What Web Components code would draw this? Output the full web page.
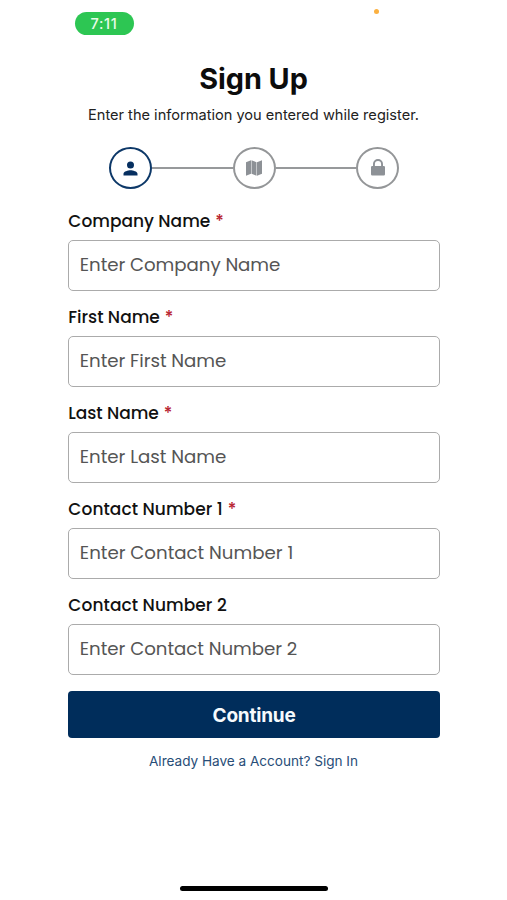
<!DOCTYPE html>
<html lang="en">
<head>
<meta charset="utf-8">
<title>Sign Up</title>
<style>
html,body{margin:0;height:100%;background:#fff;overflow:hidden}
</style>
</head>
<body>
<sign-up-screen></sign-up-screen>
<script>
// Single line of text whose tracking is adjusted to fill the given width.
class FitText extends HTMLElement {
  connectedCallback() {
    const root = this.attachShadow({mode: 'open'});
    root.innerHTML = `<style>:host{display:inline-block;white-space:nowrap}span{display:inline-block}</style><span><slot></slot></span>`;
    const span = root.querySelector('span');
    const want = parseFloat(this.getAttribute('width'));
    const n = this.textContent.length;
    const ls = (want - span.getBoundingClientRect().width) / n;
    span.style.letterSpacing = ls.toFixed(3) + 'px';
  }
}
customElements.define('fit-text', FitText);

class StatusBar extends HTMLElement {
  constructor() {
    super();
    this.attachShadow({mode: 'open'}).innerHTML = `<style>
:host{display:block;position:relative;height:47px;box-sizing:border-box;padding:12px 0 0 74.5px}
.pill{display:flex;align-items:center;justify-content:center;width:59px;height:23px;border-radius:12px;background:#2dc653;color:#e9fbe9;font:500 14.5px/23px Inter,sans-serif}
i{position:absolute;left:373.5px;top:8.5px;width:5px;height:5px;border-radius:50%;background:#fbb040}
</style><div class="pill"><fit-text width="27">7:11</fit-text></div><i></i>`;
  }
}
customElements.define('status-bar', StatusBar);

class StepIcon extends HTMLElement {
  constructor() {
    super();
    this.attachShadow({mode: 'open'}).innerHTML = `<style>
:host{display:flex;flex:none;box-sizing:border-box;width:43px;height:42px;border:2px solid #949698;border-radius:50%;align-items:center;justify-content:center;color:#8d9196}
:host([active]){border-color:#0d3868;color:#062f60}
::slotted(svg){display:block;fill:currentColor}
</style><slot></slot>`;
  }
}
customElements.define('step-icon', StepIcon);

class StepTrack extends HTMLElement {
  constructor() {
    super();
    this.attachShadow({mode: 'open'}).innerHTML = `<style>
:host{display:flex;align-items:center;width:290px;margin:0 0 0 109px}
b{flex:1;height:2px;background:#97999b}
</style>
<step-icon active><svg width="21" height="21" viewBox="0 0 24 24"><path d="M12 12a4 4 0 1 0 0-8 4 4 0 0 0 0 8zm0 2c-2.700 0-8 1.340-8 4v2h16v-2c0-2.660-5.300-4-8-4z"/></svg></step-icon>
<b></b>
<step-icon><svg width="16" height="16" viewBox="0 0 16 16"><path d="M0 2.300 5 .2V13.700L0 15.800zM5.500.2 10.500 2.300V15.800L5.500 13.700zM11 2.300 16 .2V13.700L11 15.800z"/></svg></step-icon>
<b></b>
<step-icon><svg width="14" height="17" viewBox="0 0 14 17" style="margin-top:-1px"><path fill-rule="evenodd" d="M2 7V5a5 5 0 0 1 10 0v2h.8q1.200 0 1.200 1.200v7q0 1.200-1.200 1.200H1.200Q0 16.400 0 15.200V8.200Q0 7 1.200 7zm1.900 0h6.200V5a3.100 3.100 0 0 0-6.200 0z"/></svg></step-icon>`;
  }
}
customElements.define('step-track', StepTrack);

class FormField extends HTMLElement {
  connectedCallback() {
    const g = n => this.getAttribute(n);
    this.attachShadow({mode: 'open'}).innerHTML = `<style>
:host{display:block}
.label{display:flex;gap:5px;height:30px;font:500 17px/22px Poppins,Inter,sans-serif;color:#111}
.star{color:#b8232f}
.box{display:flex;align-items:center;box-sizing:border-box;height:51px;padding:0 10.500px;border:1.500px solid #ababab;border-radius:5px;font:400 18.200px/26px Poppins,Inter,sans-serif;color:#555}
.box fit-text{margin-top:-1px}
</style>
<div class="label"><fit-text width="${g('lw')}">${g('label')}</fit-text>${this.hasAttribute('required') ? '<span class="star">*</span>' : ''}</div>
<div class="box"><fit-text width="${g('pw')}">${g('placeholder')}</fit-text></div>`;
  }
}
customElements.define('form-field', FormField);

class PrimaryButton extends HTMLElement {
  constructor() {
    super();
    this.attachShadow({mode: 'open'}).innerHTML = `<style>
:host{display:flex;align-items:center;justify-content:center;box-sizing:border-box;height:47px;padding-top:2px;border-radius:4px;background:#002d5b;color:#f6fafd;font:700 19px/45px Inter,sans-serif}
</style><slot></slot>`;
  }
}
customElements.define('primary-button', PrimaryButton);

class SignUpScreen extends HTMLElement {
  constructor() {
    super();
    this.attachShadow({mode: 'open'}).innerHTML = `<style>
:host{display:flex;flex-direction:column;width:507px;height:900px;background:#fff;color:#0c0c0c;font-family:Inter,sans-serif}
h1{margin:14px 0 0;text-align:center;font:700 28.800px/36px Inter,sans-serif}
p{margin:7px 0 0;text-align:center;font:400 14.600px/22px Inter,sans-serif;color:#222}
step-track{margin-top:21px}
form{display:flex;flex-direction:column;gap:15px;width:371.500px;margin:20.500px 0 0 68.300px}
primary-button{margin-top:1.500px}
.link{margin:12px 0 0;font-size:13.600px;color:#284d77}
.home{width:148px;height:5px;border-radius:3px;background:#000;margin:auto auto 9px}
</style>
<status-bar></status-bar>
<h1><fit-text width="108.500">Sign Up</fit-text></h1>
<p><fit-text width="331">Enter the information you entered while register.</fit-text></p>
<step-track></step-track>
<form>
<form-field label="Company Name" lw="142" placeholder="Enter Company Name" pw="200.500" required></form-field>
<form-field label="First Name" lw="91.500" placeholder="Enter First Name" pw="146.500" required></form-field>
<form-field label="Last Name" lw="90.500" placeholder="Enter Last Name" pw="146.500" required></form-field>
<form-field label="Contact Number 1" lw="154.500" placeholder="Enter Contact Number 1" pw="213.500" required></form-field>
<form-field label="Contact Number 2" lw="158.500" placeholder="Enter Contact Number 2" pw="217.500"></form-field>
<primary-button><fit-text width="83">Continue</fit-text></primary-button>
</form>
<p class="link"><fit-text width="209">Already Have a Account? Sign In</fit-text></p>
<div class="home"></div>`;
  }
}
customElements.define('sign-up-screen', SignUpScreen);
</script>
</body>
</html>
